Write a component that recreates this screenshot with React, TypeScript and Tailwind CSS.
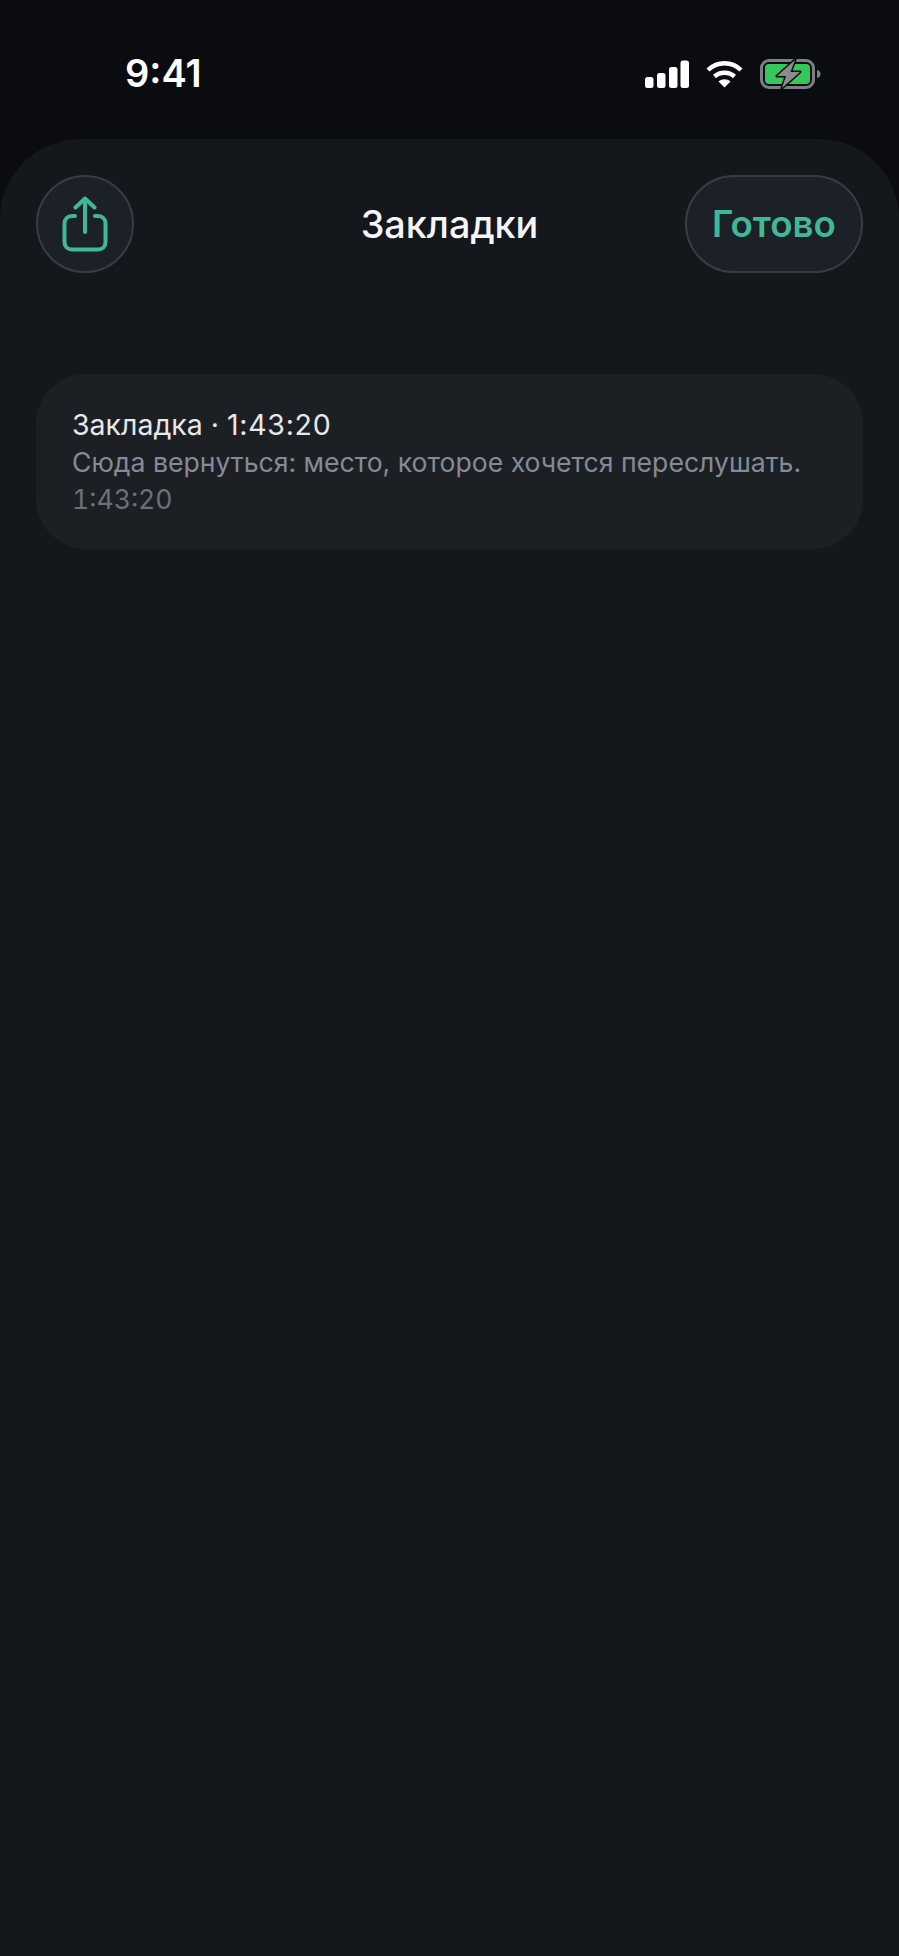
export default function App() {
  return (
    <div className="flex h-[1956px] w-[899px] flex-col overflow-hidden bg-[#0a0c10] font-['Inter',sans-serif]">
      <div className="flex h-[139px] shrink-0 items-start justify-between pl-[125px] pr-[78px] pt-[51px]">
        <span className="text-[38px] font-semibold leading-[44px] text-white">9:41</span>
        <div className="mt-[8px] flex items-center">
          <svg width="44" height="28" viewBox="0 0 44 28" fill="#fff">
            <rect x="0" y="17" width="8.5" height="11" rx="2.5" />
            <rect x="12" y="13" width="8.5" height="15" rx="2.5" />
            <rect x="24" y="7" width="8.5" height="21" rx="2.5" />
            <rect x="35.5" y="0.5" width="8.5" height="27.5" rx="2.5" />
          </svg>
          <svg className="ml-[17px]" width="37" height="28" viewBox="0 0 37 28" fill="none" stroke="#fff" strokeWidth="4.4">
            <path d="M2 10 C11.5 1 25.5 1 35 10" />
            <path d="M8.5 16.5 C14 11.5 23 11.5 28.5 16.5" />
            <path d="M18.5 27.5 L12.5 21.5 C16 18.6 21 18.6 24.5 21.5 Z" fill="#fff" stroke="none" />
          </svg>
          <svg className="ml-[17px]" width="61" height="30" viewBox="0 0 61 30" fill="none">
            <rect x="1.5" y="1.5" width="52" height="27" rx="7.5" stroke="#7d8082" strokeWidth="3" />
            <rect x="5" y="5" width="45" height="20" rx="4" fill="#35c759" />
            <path d="M57 11 C59.5 11.5 60.5 13 60.5 15 C60.5 17 59.5 18.5 57 19 Z" fill="#7d8082" />
            <path d="M35 1 L17 17 H26 L22 29 L40 13 H30.5 Z" fill="#8a8c8e" stroke="#0a0c10" strokeWidth="3" strokeLinejoin="round" paintOrder="stroke" />
          </svg>
        </div>
      </div>
      <div className="flex flex-1 flex-col rounded-t-[80px] bg-[#14171c] px-[36px] pt-[36px]">
        <div className="grid h-[98px] grid-cols-[1fr_auto_1fr] items-center">
          <button className="flex h-[98px] w-[98px] items-center justify-center rounded-full border-2 border-[#383d45] bg-[#1c2027]">
            <svg width="46" height="56" viewBox="0 0 46 56" fill="none" stroke="#3fb896" strokeWidth="4" strokeLinecap="round" strokeLinejoin="round">
              <path d="M13 20 H10 C5.5 20 2.5 23 2.5 27.5 V46 C2.5 50.5 5.5 53.5 10 53.5 H36 C40.5 53.5 43.5 50.5 43.5 46 V27.5 C43.5 23 40.5 20 36 20 H33" />
              <path d="M23 36 V3" />
              <path d="M13.5 11.5 L23 2.5 L32.5 11.5" />
            </svg>
          </button>
          <h1 className="text-[37.8px] font-medium leading-[44px] text-[#f4f5f6]">Закладки</h1>
          <div className="flex justify-end">
            <button className="flex h-[98px] w-[178px] items-center justify-center rounded-[49px] border-2 border-[#383d45] bg-[#1c2027] text-[36.7px] font-semibold leading-[44px] text-[#3fb896]">
              Готово
            </button>
          </div>
        </div>
        <div className="mt-[101px] flex h-[175px] flex-col rounded-[50px] bg-[#1c2025] px-[36px] pt-[33px]">
          <div className="text-[28.5px] leading-[36px] text-[#e6e8ea]">
            Закладка · <span className="tracking-[0.7px]">1:43:20</span>
          </div>
          <div className="mt-px text-[26.6px] leading-[36px] text-[#858b96]">Сюда вернуться: место, которое хочется переслушать.</div>
          <div className="mt-px text-[26.6px] leading-[36px] text-[#6b7079] tabular-nums">1:43:20</div>
        </div>
      </div>
    </div>
  );
}
